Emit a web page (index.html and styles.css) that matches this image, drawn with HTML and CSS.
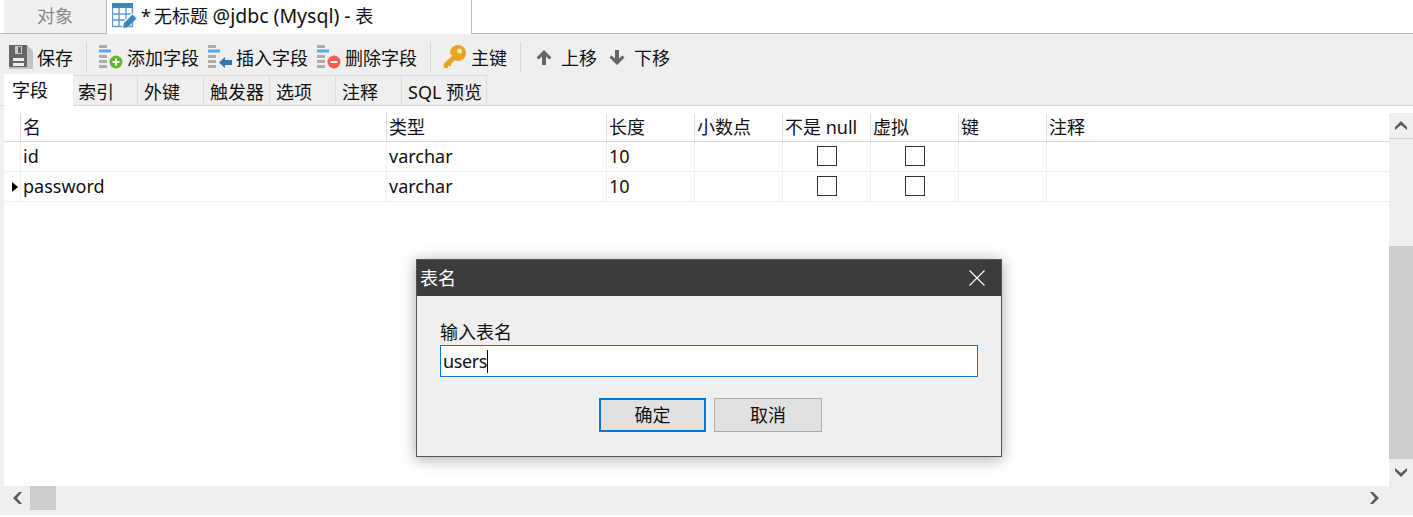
FILE: index.html
```html
<!DOCTYPE html>
<html lang="zh-CN">
<head>
<meta charset="utf-8">
<title>无标题 @jdbc (Mysql) - 表</title>
<link rel="stylesheet" href="styles.css">
</head>
<body>
<div class="app">
  <div class="doc-tabs">
    <div class="doc-tab">对象</div>
    <div class="doc-tab active">
      <svg class="doc-icon" width="25" height="26" viewBox="0 0 25 26">
        <rect x="0" y="0" width="21" height="24" fill="#fff"/>
        <rect x="0" y="0" width="21" height="5" fill="#3d84c0"/>
        <path d="M.5 5v18.5h20V5M7 5v18.5M14 5v18.5M.5 11h20M.5 17h20" fill="none" stroke="#5b9bd5" stroke-width="1.4"/>
        <path d="M10 25l1-6 9-9 5 5-9 9z" fill="#fff"/>
        <path d="M11 25l1-5 8.500-8.500 4 4L16 24z" fill="#3d84c0"/>
      </svg>
      <span class="doc-title"><span class="star">*</span>无标题 <span class="latin">@jdbc (Mysql) -</span> 表</span>
    </div>
  </div>

  <div class="toolbar">
    <div class="tool tool-save">
      <svg class="icon" width="24" height="24" viewBox="0 0 24 24">
        <path d="M0 0h18l6 6v18H0z" fill="#c2c2c2"/>
        <path d="M0 0h18v22H0z" fill="#666"/>
        <rect x="6" y="1" width="7" height="8" fill="#c9c9c9"/>
        <rect x="9" y="2" width="3" height="6" fill="#666"/>
        <rect x="4" y="13" width="11" height="3" fill="#eee"/>
        <rect x="4" y="18" width="11" height="3" fill="#eee"/>
      </svg>
      <span>保存</span>
    </div>
    <div class="sep"></div>
    <div class="tool">
      <svg class="icon" width="24" height="24" viewBox="0 0 24 24">
        <path d="M0 0h8v3H0zM0 10h8v3H0zM0 15h8v3H0zM0 20h8v3H0z" fill="#adadad"/>
        <rect y="4.500" width="12" height="3" fill="#5aa9e6"/>
        <circle cx="17" cy="17" r="6.500" fill="#5fbb2e"/>
        <path d="M13.500 17h7M17 13.500v7" stroke="#fff" stroke-width="2"/>
      </svg>
      <span>添加字段</span>
    </div>
    <div class="tool">
      <svg class="icon" width="24" height="24" viewBox="0 0 24 24">
        <path d="M0 0h8v3H0zM0 10h8v3H0zM0 15h8v3H0zM0 20h8v3H0z" fill="#adadad"/>
        <rect y="4.500" width="12" height="3" fill="#5aa9e6"/>
        <path d="M11 17.500l6-5.500v3h7v5h-7v3z" fill="#2f78b5"/>
      </svg>
      <span>插入字段</span>
    </div>
    <div class="tool">
      <svg class="icon" width="24" height="24" viewBox="0 0 24 24">
        <path d="M0 0h8v3H0zM0 10h8v3H0zM0 15h8v3H0zM0 20h8v3H0z" fill="#adadad"/>
        <rect y="4.500" width="12" height="3" fill="#5aa9e6"/>
        <circle cx="17" cy="17" r="6.500" fill="#fb5b4e"/>
        <path d="M13.500 17h7" stroke="#fff" stroke-width="2"/>
      </svg>
      <span>删除字段</span>
    </div>
    <div class="sep"></div>
    <div class="tool tool-key">
      <svg class="icon" width="24" height="24" viewBox="0 0 24 24">
        <path d="M15 0a8 8 0 0 1 8 8 8 8 0 0 1-8 8q-2 0-3-1L8 19v2H5v2H1l-.5-4 9-8.500Q7 9 7 8a8 8 0 0 1 8-8z" fill="#e9a321"/>
        <circle cx="16.500" cy="6" r="2.500" fill="#f7e3a8"/>
      </svg>
      <span>主键</span>
    </div>
    <div class="sep"></div>
    <div class="tool tool-up">
      <svg class="icon" width="16" height="16" viewBox="0 0 16 16">
        <path d="M8 0l7.500 7.500-2 2L10 6.500V15H6V6.500l-3.500 3-2-2z" fill="#666"/>
      </svg>
      <span>上移</span>
    </div>
    <div class="tool tool-down">
      <svg class="icon" width="16" height="16" viewBox="0 0 16 16">
        <path d="M8 15L.5 7.500l2-2L6 8.500V0h4v8.500l3.500-3 2 2z" fill="#666"/>
      </svg>
      <span>下移</span>
    </div>
  </div>

  <div class="tabs">
    <div class="tab active">字段</div>
    <div class="tab first">索引</div>
    <div class="tab">外键</div>
    <div class="tab">触发器</div>
    <div class="tab">选项</div>
    <div class="tab">注释</div>
    <div class="tab sql">SQL 预览</div>
  </div>

  <div class="workspace">
    <div class="grid-area">
      <div class="grid">
        <div class="row head">
          <div class="cell mark"></div>
          <div class="cell">名</div>
          <div class="cell">类型</div>
          <div class="cell">长度</div>
          <div class="cell">小数点</div>
          <div class="cell">不是 null</div>
          <div class="cell">虚拟</div>
          <div class="cell">键</div>
          <div class="cell">注释</div>
        </div>
        <div class="row">
          <div class="cell mark"></div>
          <div class="cell">id</div>
          <div class="cell">varchar</div>
          <div class="cell">10</div>
          <div class="cell"></div>
          <div class="cell check"><i></i></div>
          <div class="cell check"><i></i></div>
          <div class="cell"></div>
          <div class="cell"></div>
        </div>
        <div class="row">
          <div class="cell mark"><b class="pointer"></b></div>
          <div class="cell">password</div>
          <div class="cell">varchar</div>
          <div class="cell">10</div>
          <div class="cell"></div>
          <div class="cell check"><i></i></div>
          <div class="cell check"><i></i></div>
          <div class="cell"></div>
          <div class="cell"></div>
        </div>
      </div>
      <div class="vscroll">
        <div class="sb-btn sb-up">
          <svg width="12" height="9" viewBox="0 0 12 9"><path d="M6 0l6 6v3L6 4 0 9V6z" fill="#5c5c5c"/></svg>
        </div>
        <div class="v-track"><div class="v-thumb"></div></div>
        <div class="sb-btn sb-down">
          <svg width="12" height="9" viewBox="0 0 12 9"><path d="M6 9L0 3V0l6 5 6-5v3z" fill="#5c5c5c"/></svg>
        </div>
      </div>
    </div>
    <div class="hscroll">
      <div class="sb-h-btn">
        <svg width="9" height="12" viewBox="0 0 9 12"><path d="M0 6l6-6h3L4 6l5 6H6z" fill="#5c5c5c"/></svg>
      </div>
      <div class="h-thumb"></div>
      <div class="h-track"></div>
      <div class="sb-h-btn sb-right">
        <svg width="9" height="12" viewBox="0 0 9 12"><path d="M9 6l-6 6H0l5-6-5-6h3z" fill="#5c5c5c"/></svg>
      </div>
    </div>
  </div>

  <div class="dialog">
    <div class="dialog-title">
      <span>表名</span>
      <svg width="16" height="16" viewBox="0 0 16 16"><path d="M.5.5l15 15M15.500.5l-15 15" stroke="#fff" stroke-width="1.100" fill="none"/></svg>
    </div>
    <div class="dialog-body">
      <div class="dialog-label">输入表名</div>
      <div class="dialog-input"><span class="typed">users</span><i class="caret"></i></div>
      <div class="dialog-buttons">
        <div class="btn primary">确定</div>
        <div class="btn">取消</div>
      </div>
    </div>
  </div>
</div>
</body>
</html>
```
FILE: styles.css
```css
* { box-sizing: border-box; }
html, body { margin: 0; height: 100%; }
body {
  font-family: "Noto Sans", "Noto Sans CJK SC", sans-serif;
  font-size: 18px;
  color: #111;
  background: #fff;
  overflow: hidden;
}
.app {
  position: relative;
  width: 1413px;
  height: 517px;
  display: flex;
  flex-direction: column;
  overflow: hidden;
  line-height: 24px;
}

/* document tabs */
.doc-tabs {
  height: 34px;
  display: flex;
  padding-left: 4px;
  background: linear-gradient(#fff 33px, #b9b9b9 33px);
}
.doc-tab {
  width: 103px;
  height: 34px;
  background: #f0f0f0;
  color: #8a8a8a;
  border-right: 1px solid #b9b9b9;
  border-bottom: 1px solid #b9b9b9;
  text-align: center;
  padding-top: 4px;
}
.doc-tab.active {
  width: 365px;
  background: #fff;
  color: #111;
  border-bottom: 0;
  display: flex;
  align-items: flex-start;
  text-align: left;
  padding: 4px 0 0 5px;
}
.doc-icon { flex: none; margin-right: 4px; margin-top: -1px; }
.doc-title { white-space: nowrap; }
.star { margin-right: 3px; }
.latin { font-size: 19.5px; }

/* toolbar */
.toolbar {
  height: 40px;
  background: #efefef;
  display: flex;
  align-items: center;
  padding: 6px 0 0 9px;
}
.tool { display: flex; align-items: center; gap: 4px; margin-right: 9px; height: 28px; }
.tool span { margin-top: 2px; }
.icon { flex: none; }
.tool-up, .tool-down { gap: 9px; }
.tool-up .icon, .tool-down .icon { margin-top: 1px; }
.tool-up { margin-left: 3px; margin-right: 12px; }
.sep {
  width: 1px;
  height: 30px;
  background: #d8d8d8;
  margin-right: 12px;
}
.tool:has(+ .sep) { margin-right: 13px; }

/* sub tabs */
.tabs {
  height: 32px;
  background: linear-gradient(#efefef 31px, #d9d9d9 31px);
  display: flex;
  padding-left: 4px;
}
.tab {
  width: 66px;
  height: 31px;
  margin-top: 1px;
  padding: 4px 0 0 6px;
  border: 1px solid #dcdcdc;
  border-left: 0;
  border-bottom: 0;
  white-space: nowrap;
}
.tab.first { width: 65px; padding-left: 5px; }
.tab.active {
  width: 69px;
  height: 32px;
  margin-top: 0;
  background: #fff;
  padding: 4px 0 0 8px;
  border: 0;
}
.tab.sql { width: 85px; }

/* workspace */
.workspace {
  flex: none;
  height: 409px;
  border-left: 4px solid #f0f0f0;
  display: flex;
  flex-direction: column;
}
.grid-area {
  height: 380px;
  display: flex;
  background: #fff;
}
.grid { width: 1385px; padding-top: 7px; flex: none; }
.row {
  display: grid;
  grid-template-columns: 17px 366px 220px 88px 88px 88px 88px 88px 1fr;
  height: 30px;
  border-bottom: 1px solid #f0f0f0;
}
.row.head {
  height: 29px;
  border-bottom: 1px solid #d9d9d9;
}
.cell {
  border-right: 1px solid #f0f0f0;
  padding: 2px 0 0 2px;
  white-space: nowrap;
  overflow: hidden;
}
.head .cell { border-right-color: #dcdcdc; padding-top: 2px; }
.cell:last-child { border-right: 0; }
.cell.mark {
  padding: 0 2px 0 0;
  display: flex;
  align-items: center;
  justify-content: flex-end;
}
.pointer {
  width: 0;
  height: 0;
  border-left: 6px solid #000;
  border-top: 5px solid transparent;
  border-bottom: 5px solid transparent;
}
.cell.check {
  padding: 0 0 1px;
  display: flex;
  align-items: center;
  justify-content: center;
}
.cell.check i {
  display: block;
  width: 20px;
  height: 20px;
  border: 1px solid #333;
  background: #fff;
}

/* scrollbars */
.vscroll {
  width: 24px;
  margin-top: 7px;
  background: #efefef;
  display: flex;
  flex-direction: column;
}
.sb-btn { height: 25px; display: flex; align-items: center; justify-content: center; flex: none; }
.sb-up { border-bottom: 1px solid #d5d5d5; height: 26px; }
.sb-down { height: 27px; }
.v-track { flex: 1; display: flex; flex-direction: column; justify-content: flex-end; }
.v-thumb { height: 213px; background: #cdcdcd; }
.hscroll {
  height: 29px;
  background: #efefef;
  display: flex;
  align-items: flex-start;
}
.sb-h-btn {
  width: 26px;
  height: 24px;
  display: flex;
  align-items: center;
  justify-content: center;
}
.h-thumb { width: 26px; height: 24px; background: #cdcdcd; }
.h-track { flex: 1; }
.sb-right { margin-right: 26px; }

/* dialog */
.dialog {
  position: absolute;
  left: 416px;
  top: 259px;
  width: 586px;
  height: 198px;
  background: #efefef;
  border: 1px solid #555;
  box-shadow: 0 2px 14px rgba(0, 0, 0, .35);
}
.dialog-title {
  height: 36px;
  background: #3c3c3c;
  color: #fff;
  display: flex;
  align-items: center;
  justify-content: space-between;
  padding: 0 16px 0 3px;
}
.dialog-body { padding: 24px 23px 0; }
.dialog-label { height: 25px; }
.dialog-input {
  height: 32px;
  background: #fff;
  border: 1px solid #0078d7;
  display: flex;
  align-items: center;
  padding-left: 2px;
}
.typed { letter-spacing: -.4px; }
.caret { display: block; width: 1px; height: 23px; background: #000; }
.dialog-buttons {
  display: flex;
  justify-content: flex-end;
  gap: 8px;
  margin-top: 21px;
  padding-right: 156px;
}
.btn {
  width: 108px;
  height: 34px;
  background: #e1e1e1;
  border: 1px solid #adadad;
  display: flex;
  align-items: center;
  justify-content: center;
}
.btn.primary { width: 107px; border: 2px solid #0078d7; }
```
